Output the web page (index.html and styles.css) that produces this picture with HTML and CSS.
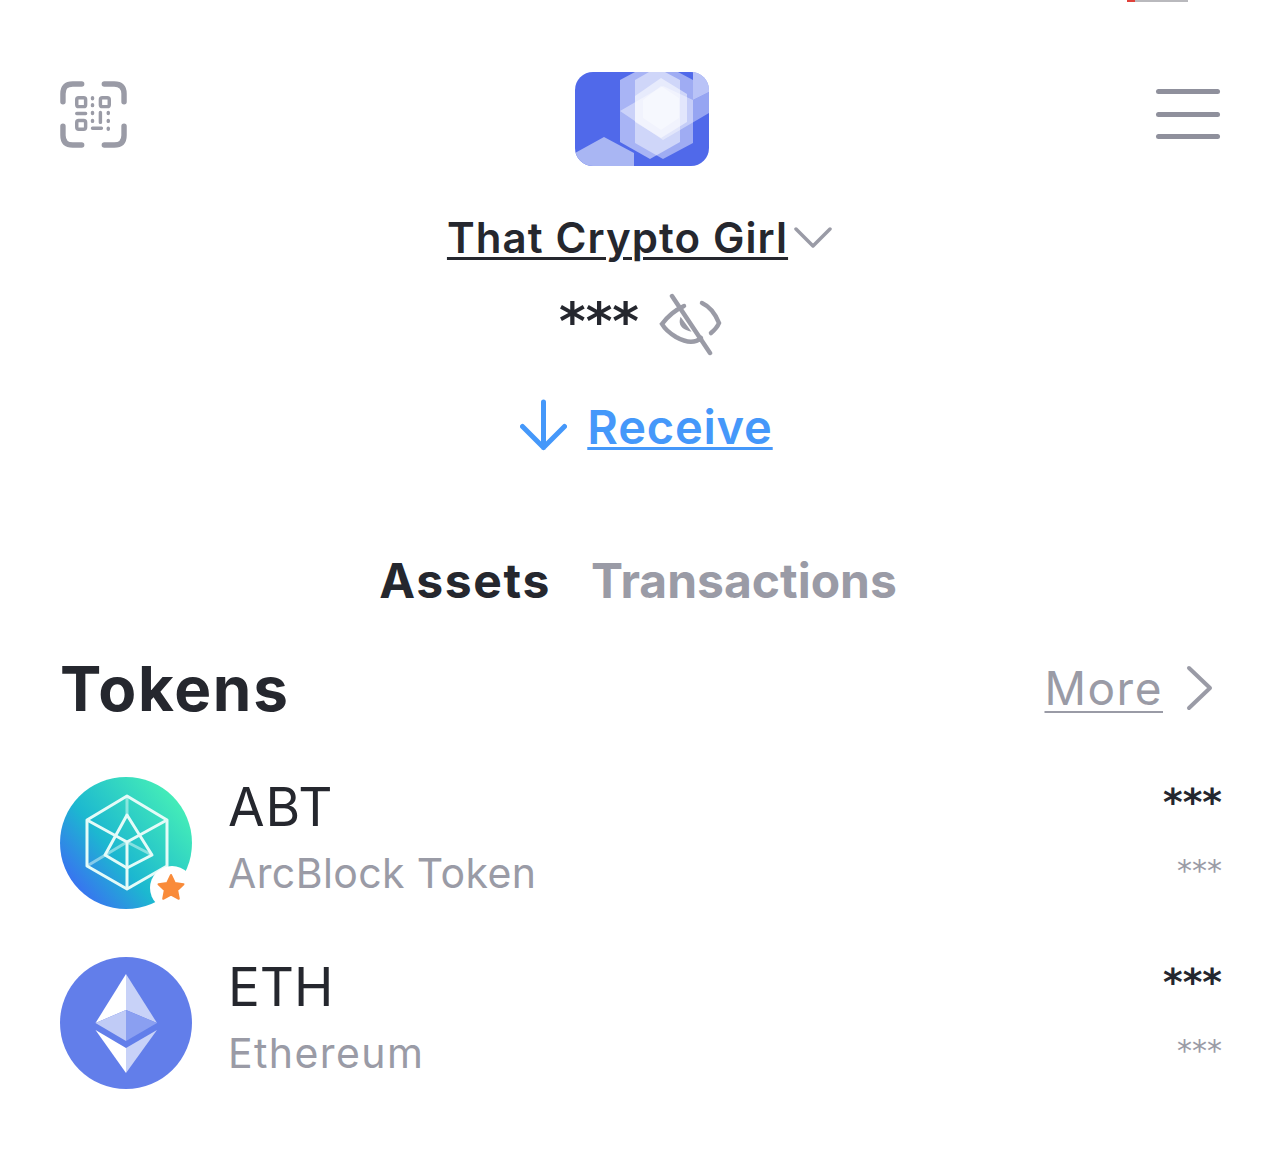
FILE: index.html
```html
<!DOCTYPE html>
<html lang="en">
<head>
  <meta charset="UTF-8">
  <meta name="viewport" content="width=device-width, initial-scale=1.0">
  <title>Wallet</title>
  <link rel="stylesheet" href="styles.css">
</head>
<body>
  <div class="status-sliver"></div>
  <div class="container">
    <header class="topbar">
      <svg class="scan-icon" width="67" height="67" viewBox="0 0 68 68" fill="none" stroke="#9a9ba6" stroke-linecap="round">
        <g stroke-width="5.5">
          <path d="M3 21V13Q3 3 13 3H22"/>
          <path d="M45 3H55Q65 3 65 13V21"/>
          <path d="M3 46V55Q3 65 13 65H22"/>
          <path d="M65 46V55Q65 65 55 65H45"/>
        </g>
        <g stroke-width="3.5">
          <rect x="17" y="17" width="9" height="9" rx="2"/>
          <rect x="41" y="17" width="9" height="9" rx="2"/>
          <rect x="17" y="40" width="9" height="9" rx="2"/>
          <path d="M17 33H26M33 17V18M33 24V25M33 32V33M33 40V41M33 48H42M41 32V42M49 32V33M49 40V41M49 48V49"/>
        </g>
      </svg>
      <svg class="logo" width="134" height="94" viewBox="0 0 134 94">
        <clipPath id="logoClip"><rect width="134" height="94" rx="18"/></clipPath>
        <g clip-path="url(#logoClip)">
          <rect width="134" height="94" fill="#5069ea"/>
          <path d="M0 81L29 65L59 81V94H0Z" fill="#a9b6f3"/>
          <path d="M45 8L75-8L105 8V70L75 87L45 70Z" fill="#fff" opacity=".5"/>
          <path d="M60 8L88-8L118 8V71L88 87L60 71Z" fill="#fff" opacity=".45"/>
          <path d="M45 39L88 14L118 28L134 20V41L88 68Z" fill="#fff" opacity=".4"/>
          <path d="M118 0H134V20L118 28Z" fill="#fff" opacity=".6"/>
          <path d="M60 24L86 6L112 22V50L86 66L60 50Z" fill="#fff" opacity=".5"/>
          <path d="M68 28L86 14L104 26V46L86 58L68 46Z" fill="#fff" opacity=".4"/>
        </g>
      </svg>
      <div class="menu-icon"><span></span><span></span><span></span></div>
    </header>

    <div class="account">
      <a class="account-name">That Crypto Girl</a>
      <svg width="40" height="22" viewBox="0 0 40 22" fill="none" stroke="#9a9ba6" stroke-width="3.5" stroke-linecap="round" stroke-linejoin="round"><path d="M3 3L20 20L37 3"/></svg>
    </div>

    <div class="balance">
      <span class="stars">***</span>
      <svg width="64" height="64" viewBox="0 0 64 64" fill="none" stroke="#9a9ba6" stroke-width="4.5" stroke-linecap="round">
        <path d="M25 13Q12 19 3 31Q7 38 17 44Q33 53 42 45"/>
        <path d="M43 10Q54 15 60 30Q58 35 52 40"/>
        <path d="M13 3L51 60"/>
        <path d="M22 26Q20 34 30 37Z" fill="#9a9ba6" stroke-width="2"/>
      </svg>
    </div>

    <div class="receive">
      <svg width="47" height="54" viewBox="0 0 47 54" fill="none" stroke="#4598fa" stroke-width="5" stroke-linecap="round" stroke-linejoin="round"><path d="M23.500 3V48.500M2.500 27.500L23.500 48.500L44.500 27.500"/></svg>
      <a class="receive-link">Receive</a>
    </div>

    <nav class="tabs">
      <span class="tab active">Assets</span>
      <span class="tab">Transactions</span>
    </nav>

    <div class="section-head">
      <h1>Tokens</h1>
      <div class="more">
        <a>More</a>
        <svg width="28" height="46" viewBox="0 0 28 46" fill="none" stroke="#9a9ba6" stroke-width="4" stroke-linecap="round" stroke-linejoin="round"><path d="M4 3L25 23L4 43"/></svg>
      </div>
    </div>

    <div class="token">
      <div class="token-icon">
        <svg width="132" height="132" viewBox="0 0 132 132">
          <defs>
            <linearGradient id="abtGrad" x1=".1" y1=".85" x2=".9" y2=".2">
              <stop offset="0" stop-color="#3a6ff2"/>
              <stop offset=".4" stop-color="#1cb8d0"/>
              <stop offset="1" stop-color="#44ecb8"/>
            </linearGradient>
          </defs>
          <circle cx="66" cy="66" r="66" fill="url(#abtGrad)"/>
          <g fill="none" stroke="#e4fbf8" stroke-width="3" stroke-linejoin="round">
            <path d="M67 19L107 43V89L67 112L27 89V43Z"/>
            <path d="M27 43L67 65L107 43M67 65V112"/>
            <path d="M67 19V38M27 89L67 65L92 78" stroke-opacity=".5"/>
            <path d="M67 38L92 78L67 91L45 78Z"/>
          </g>
        </svg>
        <span class="badge">
          <svg width="30" height="30" viewBox="0 0 30 30"><path d="M15 3L18.800 11L27.500 12.200L21.200 18.200L22.800 26.800L15 22.600L7.200 26.800L8.800 18.200L2.500 12.200L11.200 11Z" fill="#f98b3a" stroke="#f98b3a" stroke-width="2" stroke-linejoin="round"/></svg>
        </span>
      </div>
      <div class="token-info">
        <div class="token-symbol">ABT</div>
        <div class="token-name">ArcBlock Token</div>
      </div>
      <div class="token-amount">
        <div class="amount-main">***</div>
        <div class="amount-sub">***</div>
      </div>
    </div>

    <div class="token eth">
      <div class="token-icon">
        <svg width="132" height="132" viewBox="0 0 132 132">
          <circle cx="66" cy="66" r="66" fill="#627eea"/>
          <path d="M66 17V53L35.500 66Z" fill="#fff"/>
          <path d="M66 17V53L97 66Z" fill="#c8d2f8"/>
          <path d="M66 53L35.500 66L66 84Z" fill="#c0cbf6"/>
          <path d="M66 53L97 66L66 84Z" fill="#8a9ff1"/>
          <path d="M35.500 73L66 91V116Z" fill="#fff"/>
          <path d="M97 73L66 91V116Z" fill="#c8d2f8"/>
        </svg>
      </div>
      <div class="token-info">
        <div class="token-symbol">ETH</div>
        <div class="token-name">Ethereum</div>
      </div>
      <div class="token-amount">
        <div class="amount-main">***</div>
        <div class="amount-sub">***</div>
      </div>
    </div>
  </div>
</body>
</html>
```

FILE: styles.css
```css
body {
  font-family: Inter, "Open Sans", sans-serif;
  background-color: #fff;
  color: #25272e;
  margin: 0;
  padding: 0;
}

.status-sliver {
  position: absolute;
  top: 0;
  left: 1127px;
  width: 61px;
  height: 2px;
  background: linear-gradient(to right, #e0413a 0, #e0413a 8px, #b9b9bd 8px);
}

.container {
  padding: 72px 62px 0 60px;
}

.topbar {
  display: grid;
  grid-template-columns: 1fr 134px 1fr;
  align-items: start;
  height: 94px;
  margin-right: -2px;
}

.scan-icon {
  margin-top: 9px;
}

.menu-icon {
  justify-self: end;
  width: 64px;
  display: flex;
  flex-direction: column;
  gap: 17.5px;
  margin-top: 17px;
  margin-right: 4px;
}

.menu-icon span {
  height: 5px;
  border-radius: 3px;
  background-color: #8f909c;
}

.account {
  display: flex;
  justify-content: center;
  align-items: center;
  gap: 5px;
  height: 60px;
  margin-top: 41px;
  padding-right: 2px;
}

.account-name {
  font-size: 42px;
  font-weight: 600;
  letter-spacing: 1.1px;
  text-decoration: underline;
  text-decoration-thickness: 3px;
  text-underline-offset: 4px;
}

.balance {
  display: flex;
  justify-content: center;
  align-items: center;
  gap: 20px;
  height: 64px;
  margin-top: 26px;
}

.stars {
  font-family: "DejaVu Sans", sans-serif;
  font-size: 51px;
  font-weight: 700;
  line-height: 64px;
  margin-bottom: 6px;
}

.receive {
  display: flex;
  justify-content: center;
  align-items: center;
  gap: 20px;
  height: 56px;
  margin-top: 41px;
  padding-left: 11px;
  color: #4598fa;
}

.receive-link {
  font-size: 47px;
  font-weight: 600;
  letter-spacing: .8px;
  text-decoration: underline;
  text-decoration-thickness: 3px;
  text-underline-offset: 3px;
}

.tabs {
  display: flex;
  justify-content: center;
  gap: 40px;
  margin-top: 97px;
  padding-right: 6px;
  font-size: 48px;
  font-weight: 700;
  line-height: 60px;
}

.tab {
  color: #9a9ba6;
}

.tab.active {
  color: #25272e;
  letter-spacing: 1.7px;
}

.section-head {
  display: flex;
  justify-content: space-between;
  align-items: center;
  height: 70px;
  margin-top: 42px;
}

.section-head h1 {
  margin: 0;
  font-size: 62px;
  font-weight: 700;
  letter-spacing: 1.7px;
}

.more {
  display: flex;
  align-items: center;
  gap: 22px;
  padding-right: 9px;
  color: #9a9ba6;
  font-size: 46px;
}

.more a {
  letter-spacing: 1.5px;
  text-decoration: underline;
  text-decoration-thickness: 2px;
  text-underline-offset: 6px;
}

.token {
  display: flex;
  align-items: center;
  gap: 36px;
  height: 132px;
  margin-top: 48px;
}

.section-head + .token {
  margin-top: 54px;
}

.token-icon {
  position: relative;
  width: 132px;
  height: 132px;
  flex-shrink: 0;
}

.token-icon > svg {
  display: block;
}

.badge {
  position: absolute;
  right: -2px;
  bottom: -1px;
  width: 44px;
  height: 44px;
  border-radius: 50%;
  background-color: #fff;
  display: flex;
  align-items: center;
  justify-content: center;
}

.badge svg {
  margin: 0 2px 2px 0;
}

.token-info {
  flex: 1;
  padding-bottom: 11px;
}

.token-symbol {
  font-size: 53px;
  letter-spacing: 1px;
  line-height: 60px;
}

.token-name {
  font-size: 41px;
  letter-spacing: .4px;
  line-height: 50px;
  margin-top: 11px;
  color: #9a9ba6;
}

.eth .token-symbol {
  letter-spacing: 0;
}

.eth .token-name {
  letter-spacing: 1.4px;
}

.token-amount {
  font-family: "DejaVu Sans", sans-serif;
  text-align: right;
  padding-bottom: 13px;
}

.amount-main {
  font-size: 37.600px;
  font-weight: 700;
  line-height: 50px;
}

.amount-sub {
  font-size: 30px;
  line-height: 50px;
  margin-top: 19px;
  color: #9a9ba6;
}
```
